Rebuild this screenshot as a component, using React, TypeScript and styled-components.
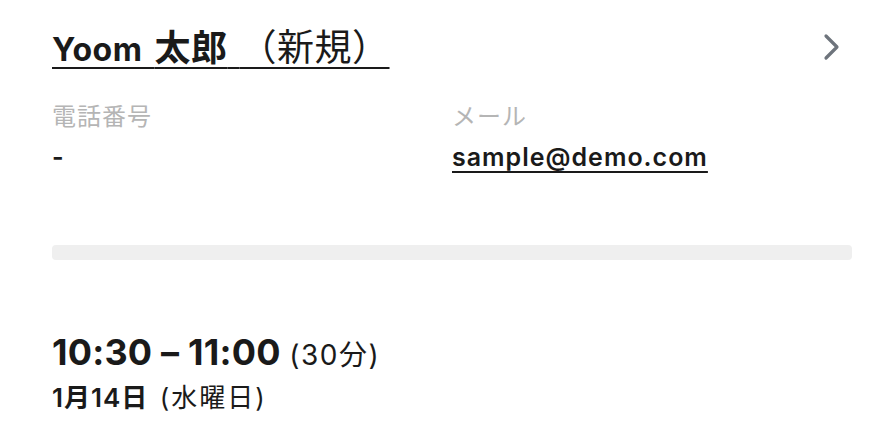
import styled, { createGlobalStyle } from 'styled-components';

const GlobalStyle = createGlobalStyle`
  body {
    margin: 0;
    background: #ffffff;
    font-family: Inter, "Noto Sans CJK JP", sans-serif;
    color: #1a1a1a;
  }
`;

const Page = styled.div`
  padding: 22px 36px 0 52px;
`;

const Header = styled.div`
  display: flex;
  align-items: center;
  justify-content: space-between;
  height: 50px;
`;

const NameLink = styled.a`
  font-size: 32px;
  line-height: 40px;
  font-weight: 700;
  letter-spacing: 0.5px;
  word-spacing: 4px;
  color: #1a1a1a;
  text-decoration: underline;
  text-decoration-thickness: 2px;
  text-underline-offset: 6px;
  white-space: pre;
`;

// Japanese glyphs sit larger than the Latin ones in this UI
const Ja = styled.span<{ $size: number; $weight?: number }>`
  font-family: "Noto Sans CJK JP", sans-serif;
  font-size: ${(p) => p.$size}px;
  font-weight: ${(p) => p.$weight ?? 700};
  letter-spacing: 0.5px;
`;

const ChevronButton = styled.button`
  border: none;
  background: none;
  padding: 0;
  margin-right: 10px;
  display: flex;
  color: #6e747c;
`;

const InfoGrid = styled.div`
  display: grid;
  grid-template-columns: 1fr 1fr;
  margin-top: 27px;
`;

const Field = styled.div`
  display: flex;
  flex-direction: column;
`;

const Label = styled.div`
  font-size: 24px;
  line-height: 32px;
  letter-spacing: 1px;
  color: #b5b5b5;
  font-family: "Noto Sans CJK JP", sans-serif;
`;

const Value = styled.div`
  margin-top: 10px;
  font-size: 25px;
  line-height: 32px;
  font-weight: 600;
  letter-spacing: 1px;
`;

const Email = styled.a`
  color: #1a1a1a;
  text-decoration: underline;
  text-decoration-thickness: 2px;
  text-underline-offset: 5px;
`;

const Divider = styled.div`
  height: 15px;
  margin-top: 72px;
  background: #efefef;
  border-radius: 4px;
`;

const TimeBlock = styled.div`
  margin-top: 70px;
`;

const TimeRange = styled.div`
  font-size: 36px;
  line-height: 44px;
  font-weight: 700;
  letter-spacing: 0.2px;
`;

const Duration = styled.span`
  font-size: 28px;
  font-weight: 400;
  letter-spacing: 1.5px;
`;

const DateLine = styled.div`
  margin-top: 5px;
  font-size: 26px;
  line-height: 32px;
  font-weight: 600;
  letter-spacing: 1px;
  word-spacing: 4px;
`;

const Weekday = styled.span`
  font-weight: 400;
  letter-spacing: 2px;
`;

export default function App() {
  return (
    <>
      <GlobalStyle />
      <Page>
        <Header>
          <NameLink>
            Yoom <Ja $size={36}>太郎</Ja> <Ja $size={37} $weight={400}>（新規）</Ja>
          </NameLink>
          <ChevronButton aria-label="詳細">
            <svg width="20" height="28" viewBox="0 0 20 28" fill="none">
              <path
                d="M4 3 L15 14 L4 25"
                stroke="currentColor"
                strokeWidth="3.2"
                strokeLinecap="round"
                strokeLinejoin="round"
              />
            </svg>
          </ChevronButton>
        </Header>

        <InfoGrid>
          <Field>
            <Label>電話番号</Label>
            <Value>-</Value>
          </Field>
          <Field>
            <Label>メール</Label>
            <Value>
              <Email>sample@demo.com</Email>
            </Value>
          </Field>
        </InfoGrid>

        <Divider />

        <TimeBlock>
          <TimeRange>
            10:30 – 11:00 <Duration>(30分)</Duration>
          </TimeRange>
          <DateLine>
            1月14日 <Weekday>(水曜日)</Weekday>
          </DateLine>
        </TimeBlock>
      </Page>
    </>
  );
}
